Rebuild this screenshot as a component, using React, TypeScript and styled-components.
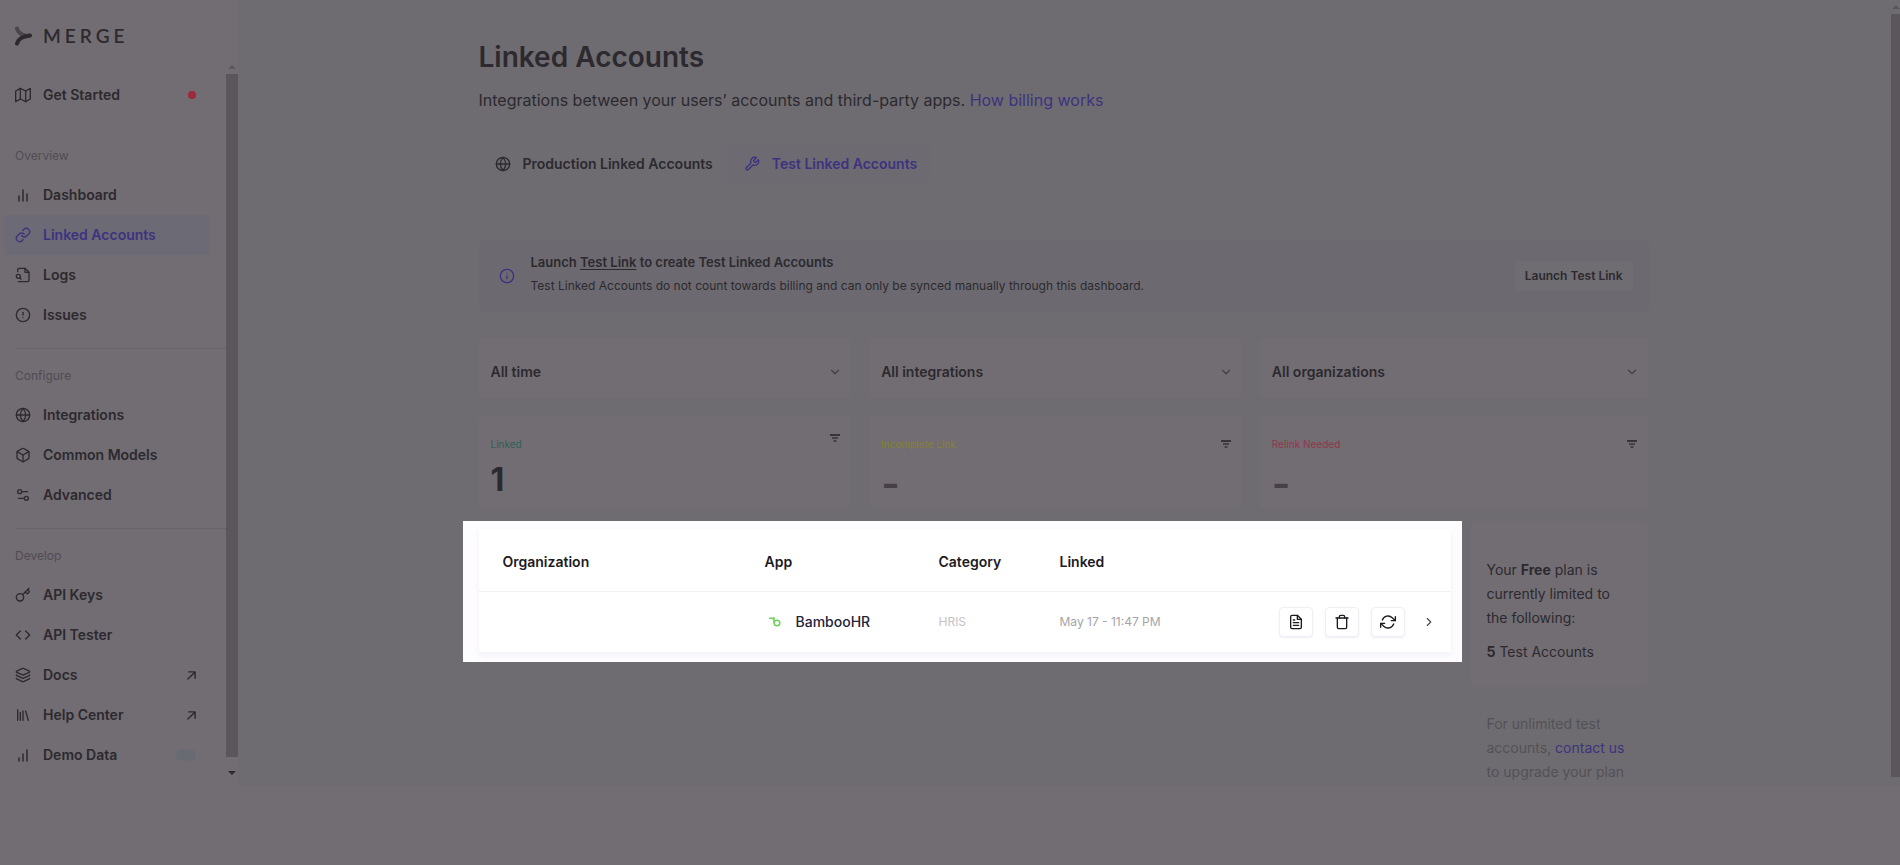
import React from "react";
import styled, { createGlobalStyle, css } from "styled-components";
import {
  FiAlertCircle, FiBox, FiChevronDown, FiChevronRight, FiCode, FiFileText,
  FiGlobe, FiInfo, FiLink, FiMap, FiRefreshCw, FiTool, FiTrash,
} from "react-icons/fi";
import { Key, Layers, Library, Settings2 } from "lucide-react";

const color = {
  surface: "#726d72",
  canvas: "#6e6c70",
  banner: "#6c6970",
  raised: "#706d72",
  line: "#69646a",
  thumb: "#5b555c",
  ink: "#2c292f",
  muted: "#504c52",
  faint: "#535156",
  accent: "#3c3380",
};

const GlobalStyle = createGlobalStyle`
  *, *::before, *::after { box-sizing: border-box; }
  body { margin: 0; background: ${color.surface}; color: ${color.ink}; font-family: Inter, "Liberation Sans", sans-serif; font-size: 14px; line-height: 24px; }
  button, select, input { font: inherit; color: inherit; }
  h1, p { margin: 0; }
  svg { flex: none; display: block; }
`;

const Shell = styled.div`
  display: flex;
  align-items: flex-start;
  min-height: 100vh;
  background: ${color.surface};
`;

/* Sidebar */
const Sidebar = styled.aside`
  flex: none;
  width: 238px;
`;
const Brand = styled.a`
  display: flex;
  align-items: center;
  gap: 11px;
  height: 64px;
  padding: 8px 0 0 15px;
  color: ${color.ink};
  text-decoration: none;
`;
const Wordmark = styled.span`
  font-family: Lato, sans-serif;
  font-size: 19px;
  font-weight: 600;
  letter-spacing: 4px;
`;
const NavScroller = styled.div`
  display: flex;
`;
const Nav = styled.nav`
  flex: 1;
  padding: 11px 0 4px;
`;
const NavGroup = styled.div`
  padding-bottom: 13px;
`;
const Spacer = styled.div`
  height: 16px;
`;
const Rule = styled.hr`
  height: 1px;
  margin: 0 0 15px 15px;
  border: 0;
  background: ${color.line};
`;
const GroupLabel = styled.div`
  height: 31px;
  padding-left: 15px;
  font-size: 12px;
  line-height: 24px;
  color: ${color.muted};
`;
const itemBox = css`
  display: flex;
  align-items: center;
  gap: 12px;
  height: 40px;
  margin: 0 16px 0 4px;
  padding: 0 14px 0 11px;
  border-radius: 4px;
  font-weight: 600;
`;
const NavLink = styled.a<{ $active?: boolean }>`
  ${itemBox}
  text-decoration: none;
  color: ${(p) => (p.$active ? color.accent : color.ink)};
  background: ${(p) => (p.$active ? "#6c6a74" : "transparent")};
`;
const ToggleRow = styled.label`
  ${itemBox}
`;
const Grow = styled.span`
  flex: 1;
`;
const Alert = styled.span`
  width: 8px;
  height: 8px;
  border-radius: 50%;
  background: #9c2a3c;
`;
const Switch = styled.input`
  appearance: none;
  width: 20px;
  height: 12px;
  margin: 0;
  border-radius: 6px;
  background: #696b73;
`;
const ScrollTrack = styled.div<{ $w: number; $gap?: number }>`
  flex: none;
  display: flex;
  flex-direction: column;
  align-items: center;
  width: ${(p) => p.$w}px;
  margin-bottom: ${(p) => p.$gap ?? 0}px;
`;
const Arrow = styled.span<{ $down?: boolean; $page?: boolean }>`
  flex: none;
  width: 0;
  height: 0;
  border: 4px solid transparent;
  ${(p) => (p.$down
    ? css`border-top-color: ${color.ink}; margin: 14px 0 0;`
    : css`border-bottom-color: ${color.thumb}; margin: ${p.$page ? 1 : -3}px 0 5px;`)}
`;
const Thumb = styled.div`
  flex: 1;
  width: 100%;
  background: ${color.thumb};
`;

/* Main column */
const Main = styled.main`
  flex: 1;
  display: flex;
  min-width: 0;
  background: ${color.canvas};
`;
const Scrollable = styled.div`
  flex: 1;
  min-width: 0;
  padding: 39px 32px 2px;
`;
const Content = styled.div`
  max-width: 1172px;
  margin: 0 auto;
`;
const Title = styled.h1`
  font-size: 28px;
  line-height: 36px;
  font-weight: 600;
`;
const Lead = styled.p`
  margin-top: 13px;
  font-size: 16px;
  line-height: 24px;
`;
const TextLink = styled.a`
  color: ${color.accent};
  text-decoration: none;
`;
const Tabs = styled.div`
  display: flex;
  gap: 2px;
  margin-top: 32px;
`;
const Tab = styled.button<{ $active?: boolean }>`
  display: flex;
  align-items: center;
  gap: 12px;
  height: 40px;
  padding: 0 13px 0 16px;
  border: 0;
  border-radius: 6px;
  font-weight: 600;
  color: ${(p) => (p.$active ? color.accent : color.ink)};
  background: ${(p) => (p.$active ? "#6d6a71" : "transparent")};
`;
const Banner = styled.section`
  display: flex;
  align-items: center;
  gap: 16px;
  margin-top: 56px;
  padding: 10px 18px 10px 20px;
  border-radius: 8px;
  background: ${color.banner};
`;
const BannerText = styled.div`
  flex: 1;
  padding-bottom: 4px;
  font-size: 12px;
  line-height: 24px;
`;
const BannerTitle = styled.p`
  font-size: 13px;
  line-height: 24px;
  font-weight: 600;
  a { color: inherit; text-underline-offset: 2px; }
`;
const LaunchButton = styled.button`
  height: 30px;
  padding: 0 10px;
  border: 0;
  border-radius: 4px;
  background: ${color.raised};
  font-size: 12px;
  font-weight: 600;
`;
const Columns = styled.div<{ $top: number }>`
  display: grid;
  grid-template-columns: repeat(3, 1fr);
  margin-top: ${(p) => p.$top}px;
`;
const cardBox = css`
  background: ${color.surface};
  border-radius: 4px;
  margin-right: 18px;
  &:last-child { margin-right: 2px; }
`;
const FilterCard = styled.label`
  ${cardBox}
  display: grid;
  align-items: center;
  height: 60px;
  & > * { grid-area: 1 / 1; }
  & > svg { justify-self: end; margin-right: 9px; pointer-events: none; }
`;
const Select = styled.select`
  appearance: none;
  width: 100%;
  height: 60px;
  padding: 8px 12px 0;
  border: 0;
  background: transparent;
  font-weight: 600;
`;
const SelectArrow = styled(FiChevronDown)`
  margin-top: 8px;
  color: #423e45;
`;
const StatCard = styled.div`
  ${cardBox}
  display: flex;
  justify-content: space-between;
  height: 92px;
  padding: 16px 10px 0 12px;
`;
const StatLabel = styled.div<{ $tone: string }>`
  font-size: 10px;
  line-height: 24px;
  color: ${(p) => p.$tone};
`;
const StatValue = styled.div<{ $dim?: boolean }>`
  font-size: ${(p) => (p.$dim ? 40 : 32)}px;
  line-height: ${(p) => (p.$dim ? 56 : 48)}px;
  font-weight: ${(p) => (p.$dim ? 600 : 700)};
  color: ${(p) => (p.$dim ? "#464148" : color.ink)};
`;
const IconButton = styled.button<{ $low?: boolean }>`
  align-self: flex-start;
  display: flex;
  margin: ${(p) => (p.$low ? 6 : 0)}px 0 0;
  padding: 0;
  border: 0;
  background: none;
`;
const Lower = styled.div`
  display: flex;
  align-items: flex-start;
  gap: 9px;
  margin: 13px 3px 0 -16px;
`;
const Spotlight = styled.section`
  flex: 1;
  min-width: 0;
  padding: 8px 11px 10px 16px;
  background: #fdfcff;
`;
const Table = styled.table`
  width: 100%;
  table-layout: fixed;
  border-collapse: collapse;
  background: #fff;
  box-shadow: 0 3px 6px #f3f1f6;
  color: #1c1b22;
  th, td { padding: 0; text-align: left; }
  th { height: 62px; padding-top: 4px; font-weight: 600; border-bottom: 1px solid #f1f0f4; }
  td { height: 61px; }
  th:first-child, td:first-child { padding-left: 24px; }
`;
const Col = styled.col<{ $w?: number }>`
  width: ${(p) => (p.$w ? `${p.$w}px` : "auto")};
`;
const AppName = styled.div`
  display: flex;
  align-items: center;
  gap: 15px;
  padding-left: 4px;
  font-weight: 500;
  color: #23233a;
`;
const Meta = styled.span<{ $tone: string }>`
  font-size: 12px;
  color: ${(p) => p.$tone};
`;
const Actions = styled.div`
  display: flex;
  align-items: center;
  justify-content: flex-end;
  gap: 12px;
  padding-right: 15px;
`;
const ActionButton = styled.button`
  display: grid;
  place-items: center;
  width: 34px;
  height: 30px;
  padding: 0;
  border: 1px solid #f1eef5;
  border-radius: 4px;
  background: #fff;
  box-shadow: 0 1px 2px #efecf3;
`;
const OpenButton = styled.button`
  display: flex;
  margin-left: 5px;
  padding: 0;
  border: 0;
  background: none;
  color: #4b4951;
`;
const PlanColumn = styled.aside`
  flex: none;
  width: 177px;
`;
const PlanCard = styled.div`
  display: flex;
  flex-direction: column;
  gap: 10px;
  padding: 37px 16px 23px;
  border-radius: 4px;
  background: ${color.surface};
`;
const PlanNote = styled.p`
  padding: 25px 16px 0;
  color: ${color.faint};
`;

function BrandMark() {
  return (
    <svg width="17" height="20" viewBox="0 0 17 20" fill="none" strokeLinecap="round">
      <path d="M2 2.500C3 6 6 8.500 10 9.500" stroke="#4b464d" strokeWidth="4" />
      <path d="M2 17.500C4 12 8 10.500 15 9.500" stroke={color.ink} strokeWidth="4" />
    </svg>
  );
}

function LogsIcon() {
  return (
    <svg width="16" height="16" viewBox="0 0 24 24" fill="none" stroke="currentColor" strokeWidth="2" strokeLinecap="round" strokeLinejoin="round">
      <path d="M4 7V4a2 2 0 0 1 2-2h9l6 6v12a2 2 0 0 1-2 2H5" />
      <path d="M15 2v6h6" />
      <circle cx="5" cy="14" r="3" />
      <path d="M7.500 16.500 9 18" />
    </svg>
  );
}

function BarsIcon({ rising }: { rising?: boolean }) {
  return (
    <svg width="16" height="16" viewBox="0 0 16 16" stroke="currentColor" strokeWidth="1.500" strokeLinecap="round">
      <path d={rising ? "M4 14v-3M8 14V7M12 14V3" : "M4 14V9M8 14V3M12 14V7"} />
    </svg>
  );
}

function ExternalIcon() {
  return (
    <svg width="9" height="9" viewBox="0 0 10 10" fill="none" stroke="currentColor" strokeWidth="1.600" strokeLinecap="round" strokeLinejoin="round">
      <path d="M1 9 9 1M2 1h7v7" />
    </svg>
  );
}

function FilterIcon() {
  return (
    <svg width="12" height="12" viewBox="0 0 12 12" fill="none" stroke="#38333a">
      <path d="M1 3h10" strokeWidth="2" />
      <path d="M3 6h6" strokeWidth="1.500" />
      <path d="M4.500 9h3" strokeWidth="1.500" />
    </svg>
  );
}

function BambooMark() {
  return (
    <svg width="12" height="10" viewBox="0 0 12 10" fill="none" stroke="#6fcf5b" strokeWidth="1.500">
      <path d="M0 1.500C2 .8 4 1.200 4.800 3" />
      <path d="M5 0v6" />
      <circle cx="8" cy="6" r="2.800" />
    </svg>
  );
}

type Item = { label: string; icon: React.ReactNode; active?: boolean; external?: boolean; alert?: boolean };

const overview: Item[] = [
  { label: "Dashboard", icon: <BarsIcon /> },
  { label: "Linked Accounts", icon: <FiLink size={16} />, active: true },
  { label: "Logs", icon: <LogsIcon /> },
  { label: "Issues", icon: <FiAlertCircle size={16} /> },
];
const configure: Item[] = [
  { label: "Integrations", icon: <FiGlobe size={16} /> },
  { label: "Common Models", icon: <FiBox size={16} /> },
  { label: "Advanced", icon: <Settings2 size={16} /> },
];
const develop: Item[] = [
  { label: "API Keys", icon: <Key size={16} /> },
  { label: "API Tester", icon: <FiCode size={16} /> },
  { label: "Docs", icon: <Layers size={16} />, external: true },
  { label: "Help Center", icon: <Library size={16} />, external: true },
];

function NavItem({ label, icon, active, external, alert }: Item) {
  return (
    <NavLink href="#" $active={active} aria-current={active ? "page" : undefined}>
      {icon}
      <Grow>{label}</Grow>
      {alert && <Alert />}
      {external && <ExternalIcon />}
    </NavLink>
  );
}

const filters = ["All time", "All integrations", "All organizations"];
const stats = [
  { label: "Linked", value: "1", tone: "#2f5f56" },
  { label: "Incomplete Link", value: "-", tone: "#858035" },
  { label: "Relink Needed", value: "-", tone: "#94344a" },
];

export default function App() {
  return (
    <>
      <GlobalStyle />
      <Shell>
        <Sidebar>
          <Brand href="#">
            <BrandMark />
            <Wordmark>MERGE</Wordmark>
          </Brand>
          <NavScroller>
            <Nav>
              <NavGroup>
                <NavItem label="Get Started" icon={<FiMap size={16} />} alert />
              </NavGroup>
              <Spacer />
              <NavGroup>
                <GroupLabel>Overview</GroupLabel>
                {overview.map((i) => <NavItem key={i.label} {...i} />)}
              </NavGroup>
              <Rule />
              <NavGroup>
                <GroupLabel>Configure</GroupLabel>
                {configure.map((i) => <NavItem key={i.label} {...i} />)}
              </NavGroup>
              <Rule />
              <div>
                <GroupLabel>Develop</GroupLabel>
                {develop.map((i) => <NavItem key={i.label} {...i} />)}
                <ToggleRow>
                  <BarsIcon rising />
                  <Grow>Demo Data</Grow>
                  <Switch type="checkbox" role="switch" />
                </ToggleRow>
              </div>
            </Nav>
            <ScrollTrack $w={12}>
              <Arrow />
              <Thumb />
              <Arrow $down />
            </ScrollTrack>
          </NavScroller>
        </Sidebar>

        <Main>
          <Scrollable>
            <Content>
              <Title>Linked Accounts</Title>
              <Lead>
                Integrations between your users’ accounts and third-party apps.{" "}
                <TextLink href="#">How billing works</TextLink>
              </Lead>
              <Tabs role="tablist">
                <Tab role="tab" aria-selected={false}><FiGlobe size={16} />Production Linked Accounts</Tab>
                <Tab role="tab" aria-selected $active><FiTool size={16} />Test Linked Accounts</Tab>
              </Tabs>
              <Banner>
                <FiInfo size={16} color={color.accent} />
                <BannerText>
                  <BannerTitle>Launch <a href="#">Test Link</a> to create Test Linked Accounts</BannerTitle>
                  <p>Test Linked Accounts do not count towards billing and can only be synced manually through this dashboard.</p>
                </BannerText>
                <LaunchButton>Launch Test Link</LaunchButton>
              </Banner>
              <Columns $top={26}>
                {filters.map((f) => (
                  <FilterCard key={f}>
                    <Select aria-label={f}><option>{f}</option></Select>
                    <SelectArrow size={14} />
                  </FilterCard>
                ))}
              </Columns>
              <Columns $top={18}>
                {stats.map((s, i) => (
                  <StatCard key={s.label}>
                    <div>
                      <StatLabel $tone={s.tone}>{s.label}</StatLabel>
                      <StatValue $dim={i > 0}>{s.value}</StatValue>
                    </div>
                    <IconButton $low={i > 0} aria-label={`Filter by ${s.label}`}><FilterIcon /></IconButton>
                  </StatCard>
                ))}
              </Columns>
              <Lower>
                <Spotlight>
                  <Table>
                    <colgroup>
                      <Col $w={286} /><Col $w={174} /><Col $w={121} /><Col /><Col $w={190} />
                    </colgroup>
                    <thead>
                      <tr><th>Organization</th><th>App</th><th>Category</th><th>Linked</th><th /></tr>
                    </thead>
                    <tbody>
                      <tr>
                        <td />
                        <td><AppName><BambooMark />BambooHR</AppName></td>
                        <td><Meta $tone="#c3c2c7">HRIS</Meta></td>
                        <td><Meta $tone="#a5a4aa">May 17 - 11:47 PM</Meta></td>
                        <td>
                          <Actions>
                            <ActionButton aria-label="View logs"><FiFileText size={16} /></ActionButton>
                            <ActionButton aria-label="Delete"><FiTrash size={16} /></ActionButton>
                            <ActionButton aria-label="Resync"><FiRefreshCw size={16} /></ActionButton>
                            <OpenButton aria-label="Open"><FiChevronRight size={14} /></OpenButton>
                          </Actions>
                        </td>
                      </tr>
                    </tbody>
                  </Table>
                </Spotlight>
                <PlanColumn>
                  <PlanCard>
                    <p>Your <b>Free</b> plan is currently limited to the following:</p>
                    <p><b>5</b> Test Accounts</p>
                  </PlanCard>
                  <PlanNote>
                    For unlimited test accounts, <TextLink href="#">contact us</TextLink> to upgrade your plan
                  </PlanNote>
                </PlanColumn>
              </Lower>
            </Content>
          </Scrollable>
          <ScrollTrack $w={9} $gap={9}>
            <Arrow $page />
            <Thumb />
          </ScrollTrack>
        </Main>
      </Shell>
    </>
  );
}
